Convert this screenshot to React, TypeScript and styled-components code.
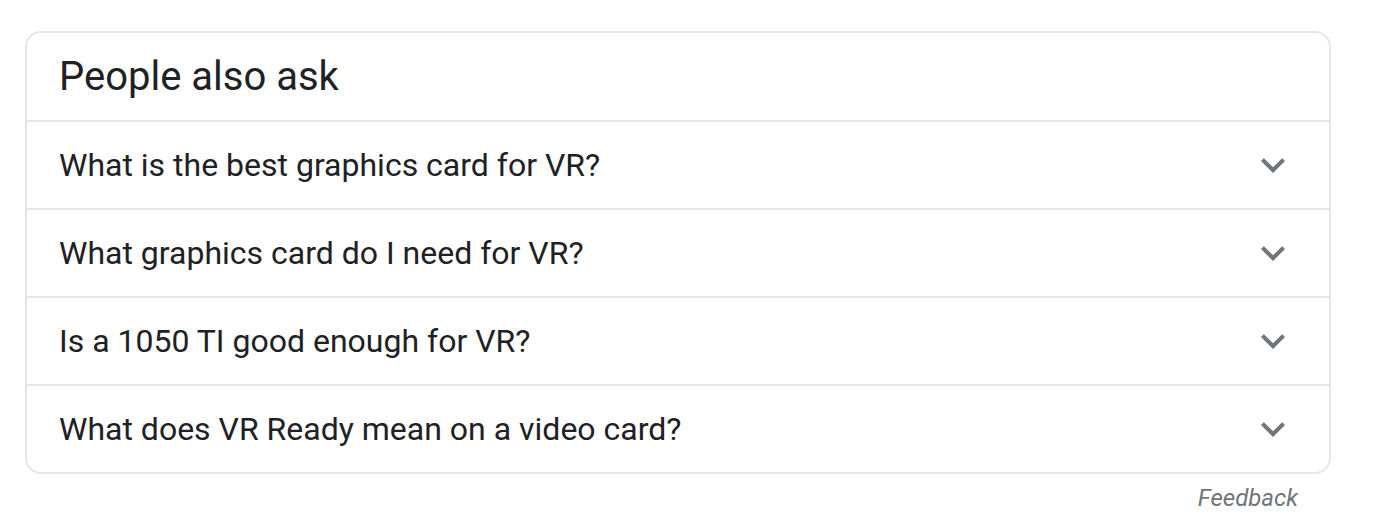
import React from 'react'
import styled, { createGlobalStyle } from 'styled-components';

const GlobalStyle = createGlobalStyle`
  body {
    margin: 0;
    background: #fff;
    font-family: Roboto, "Liberation Sans", Arial, sans-serif;
  }
`;

const Page = styled.div`
  padding: 31px 49px 0 25px;
  width: 1306px;
`;

const Card = styled.div`
  border: 2px solid #e3e5e8;
  border-radius: 16px;
  overflow: hidden;
`;

const Header = styled.div`
  height: 87px;
  display: flex;
  align-items: center;
  padding: 0 32px;
  font-size: 40px;
  color: #202124;
  border-bottom: 2px solid #e3e5e8;
`;

const Row = styled.div<{ last?: boolean }>`
  height: 86px;
  display: flex;
  align-items: center;
  justify-content: space-between;
  padding: 0 32px;
  font-size: 32px;
  color: #202124;
  border-bottom: ${props => props.last ? 'none' : '2px solid #e3e5e8'};
`;

const Chevron = styled.svg`
  width: 48px;
  height: 48px;
  fill: #70757a;
`;

const Feedback = styled.div`
  text-align: right;
  padding: 10px 33px 0 0;
  font-size: 24px;
  font-style: italic;
  color: #70757a;
`;

const questions = [
  'What is the best graphics card for VR?',
  'What graphics card do I need for VR?',
  'Is a 1050 TI good enough for VR?',
  'What does VR Ready mean on a video card?',
];

const App = () => (
  <React.Fragment>
    <GlobalStyle />
    <Page>
      <Card>
        <Header>People also ask</Header>
        {questions.map((q, i) => (
          <Row key={q} last={i === questions.length - 1}>
            {q}
            <Chevron viewBox="0 0 24 24">
              <path d="M16.59 8.59L12 13.17 7.41 8.59 6 10l6 6 6-6z" />
            </Chevron>
          </Row>
        ))}
      </Card>
      <Feedback>Feedback</Feedback>
    </Page>
  </React.Fragment>
);

export default App;
